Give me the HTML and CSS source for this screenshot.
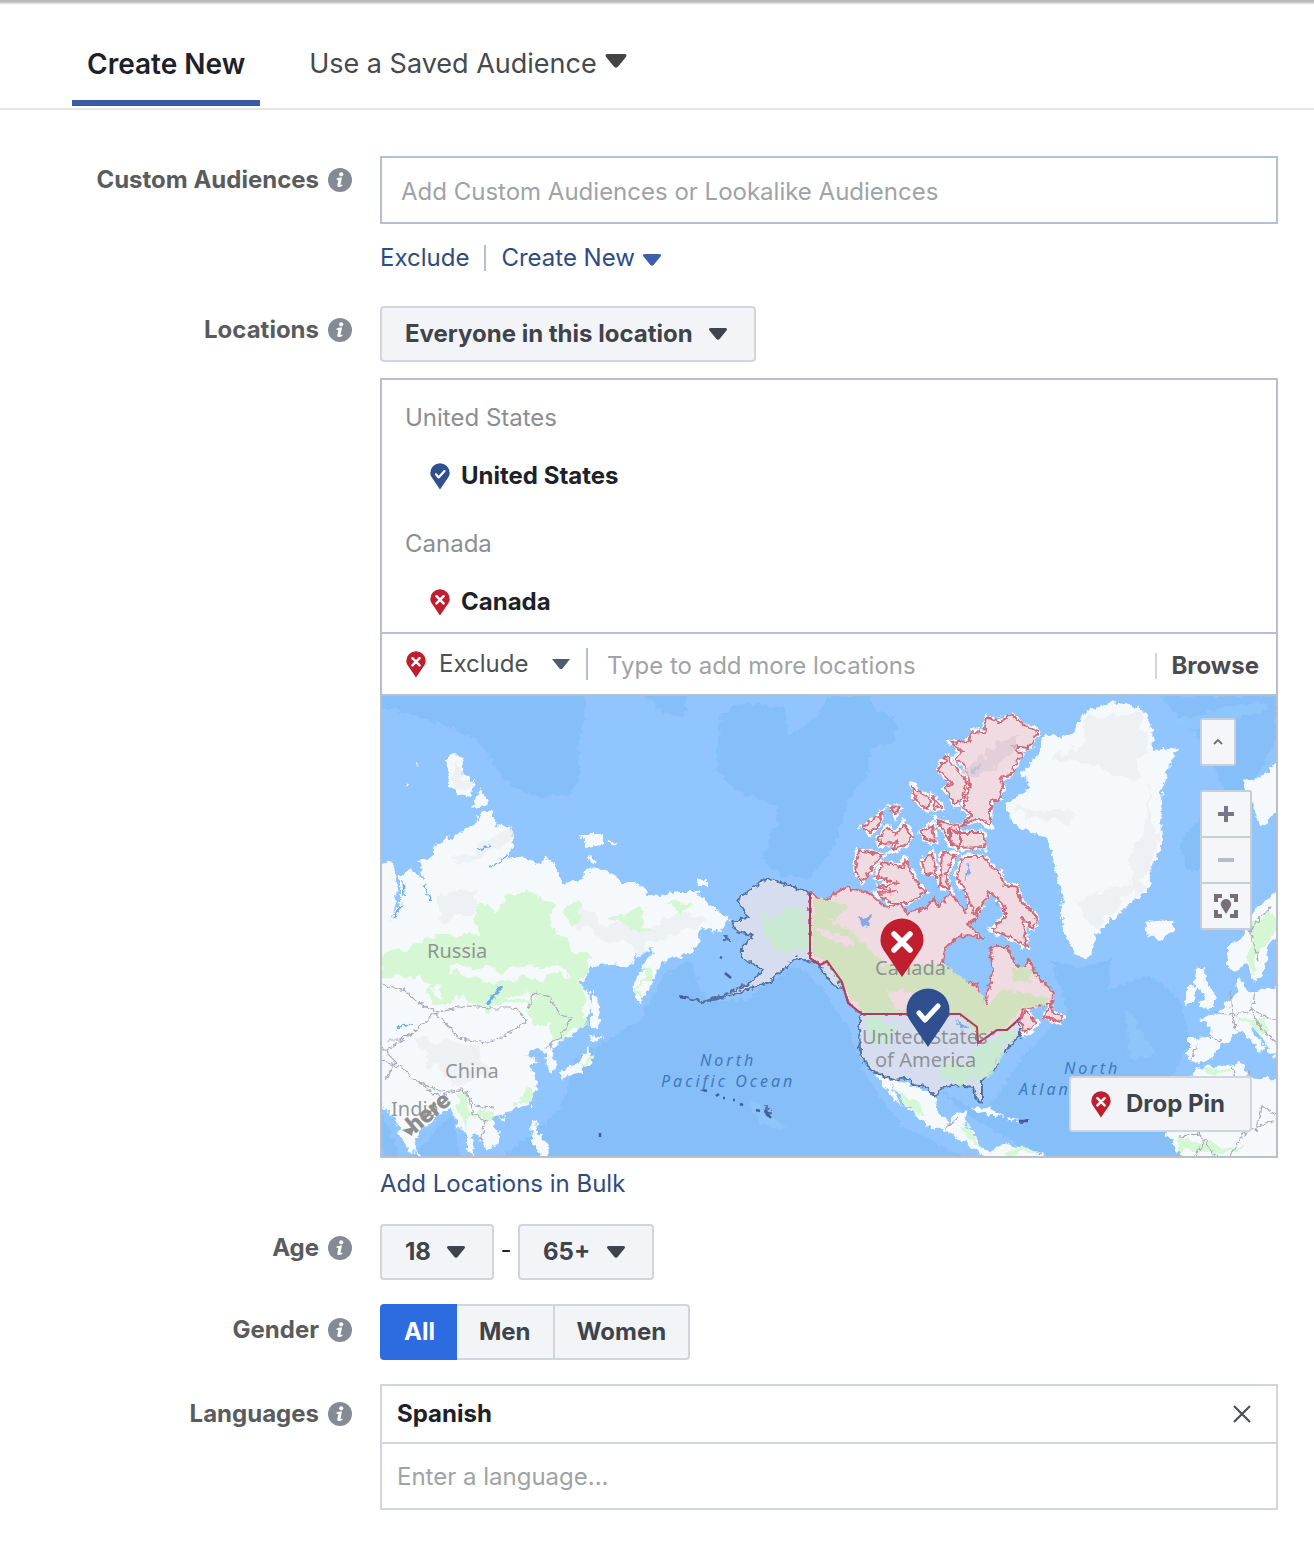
FILE: index.html
```html
<!DOCTYPE html>
<html lang="en">
<head>
<meta charset="utf-8">
<meta name="viewport" content="width=device-width, initial-scale=1">
<title>Audience</title>
<link rel="stylesheet" href="styles.css">
</head>
<body>
<svg class="sprite" aria-hidden="true">
  <symbol id="caret" viewBox="0 0 18 12"><path d="M2 0H16Q19 0 17.500 2.500L11 10.500Q9 13 7 10.500L.5 2.500Q-1 0 2 0Z" fill="currentColor"/></symbol>
  <symbol id="info" viewBox="0 0 24 24"><circle cx="12" cy="12" r="12" fill="#858b95"/><circle cx="13.200" cy="6.300" r="2.100" fill="#fff"/><path d="M8.600 10.600Q11 9.300 14 9.600L12.500 16.500Q12.300 17.600 14.600 16.600L14.300 18Q11.500 19.700 9.800 18.800Q9 18.200 9.400 16.700L10.400 12.200Q10.500 11.500 8.400 11.800Z" fill="#fff"/></symbol>
  <symbol id="pin-x" viewBox="0 0 44 60"><path d="M22 59L5 34C1.500 29 .5 26 .5 22A21.500 21.500 0 0 1 43.500 22C43.500 26 42.500 29 39 34Z" fill="#be1e2d"/><path d="M14 16L30 32M30 16L14 32" stroke="#fff" stroke-width="5.500" stroke-linecap="round"/></symbol>
  <symbol id="pin-check" viewBox="0 0 44 60"><path d="M22 59L5 34C1.500 29 .5 26 .5 22A21.500 21.500 0 0 1 43.500 22C43.500 26 42.500 29 39 34Z" fill="#2f4f8f"/><path d="M13 25L19 32L32 18" fill="none" stroke="#fff" stroke-width="5" stroke-linecap="round" stroke-linejoin="round"/></symbol>
</svg>

<nav class="tabs" aria-label="Audience source">
  <button class="tab tab-active" type="button">Create New</button>
  <button class="tab" type="button">Use a Saved Audience<svg class="tab-caret" aria-hidden="true"><use href="#caret"/></svg></button>
</nav>

<form class="form">
  <div class="row row-loose">
    <label class="label" for="custom">Custom Audiences<svg class="info" aria-hidden="true"><use href="#info"/></svg></label>
    <div class="field">
      <input class="text-input" id="custom" type="text" placeholder="Add Custom Audiences or Lookalike Audiences">
      <div class="links">
        <a class="link" href="#exclude">Exclude</a>
        <a class="link link-split" href="#create">Create New<svg class="link-caret" aria-hidden="true"><use href="#caret"/></svg></a>
      </div>
    </div>
  </div>

  <div class="row">
    <label class="label" for="scope">Locations<svg class="info" aria-hidden="true"><use href="#info"/></svg></label>
    <div class="field">
      <div class="select">
        <select class="select-box" id="scope"><option>Everyone in this location</option></select>
        <svg class="select-caret" aria-hidden="true"><use href="#caret"/></svg>
      </div>
      <div class="locations">
        <div class="location-list">
          <section class="group">
            <h3 class="group-title">United States</h3>
            <div class="place"><svg class="pin" aria-hidden="true"><use href="#pin-check"/></svg>United States</div>
          </section>
          <section class="group">
            <h3 class="group-title">Canada</h3>
            <div class="place"><svg class="pin" aria-hidden="true"><use href="#pin-x"/></svg>Canada</div>
          </section>
        </div>
        <div class="toolbar">
          <svg class="pin" aria-hidden="true"><use href="#pin-x"/></svg>
          <div class="mode">
            <select class="mode-box" aria-label="Include or exclude"><option>Exclude</option></select>
            <svg class="mode-caret" viewBox="0 0 18 11" aria-hidden="true"><path d="M0 0H18L10.500 9.500Q9 11 7.500 9.500Z" fill="#4f5b70"/></svg>
          </div>
          <input class="add-input" type="text" aria-label="Add locations" placeholder="Type to add more locations">
          <button class="browse" type="button">Browse</button>
        </div>
        <div class="map">
          <svg class="map-art" viewBox="382 696 894 460" preserveAspectRatio="xMidYMid slice" role="img" aria-label="World map">
            <defs>
              <filter id="rough" x="-2%" y="-2%" width="104%" height="104%"><feTurbulence type="fractalNoise" baseFrequency=".16" numOctaves="3" seed="4"/><feDisplacementMap in="SourceGraphic" scale="9" xChannelSelector="R" yChannelSelector="G"/></filter>
              <filter id="rough-fine" x="-2%" y="-2%" width="104%" height="104%"><feTurbulence type="fractalNoise" baseFrequency=".2" numOctaves="2" seed="9"/><feDisplacementMap in="SourceGraphic" scale="7" xChannelSelector="R" yChannelSelector="G"/></filter>
              <filter id="patchy" x="-5%" y="-5%" width="110%" height="110%"><feTurbulence type="fractalNoise" baseFrequency=".06" numOctaves="4" seed="12"/><feDisplacementMap in="SourceGraphic" scale="22" xChannelSelector="R" yChannelSelector="G"/></filter>
              <path id="arctic" d="M955 758L962 752L952 743L968 741L973 732L984 733L987 717L998 722L1013 715L1022 724L1038 732L1028 748L1012 746L1022 754L1010 775L1000 778L1003 788L1000 798L990 802V825L978 818L962 825L972 814L963 808L970 785L965 765ZM947 757L967 782L963 798L955 805L950 795L945 788L952 784L938 770ZM950 827L957 833L983 833L985 847L957 848L950 840ZM913 787L930 800L928 810L915 800ZM933 797L942 807L934 809ZM863 827L882 813L880 823L870 833ZM878 840L887 827L897 835L903 823L912 837L905 845L892 850L898 842L880 845ZM891 807L899 808L895 815ZM922 831L933 825L935 842L924 839ZM937 820L960 827V847L952 845L945 832ZM858 850L882 855L873 867L862 882L855 872ZM883 862L903 867L905 860L915 880L925 892L907 903L890 903L877 893L895 892L877 887L898 883L877 877ZM922 863L932 853L937 877L925 872ZM942 853L955 855L945 875L950 890L940 885ZM963 857H983L990 866L1000 873L1004 885L1017 887L1020 900L1037 917L1033 928L1022 918L1027 947L1010 937L992 930L1005 917V907L990 892L975 915L965 890L957 877ZM1025 1010L1037 1024L1024 1033L1021 1020ZM1050 1003L1053 1013L1062 1016L1060 1022L1045 1017Z"/>
            </defs>
            <rect x="382" y="696" width="894" height="460" fill="#90c6fd"/>
            <g fill="#86bef8" filter="url(#rough)">
              <path d="M378 690H586L584 720L578 745L580 775L570 795L540 798L512 788L494 765L478 740L442 724L400 712L378 707ZM640 690H686V716L664 714ZM720 716L740 702L785 708L788 735L812 722L832 695H870L874 708L898 720L894 742L870 748L868 775L848 800L836 845L808 880L780 875L762 858L776 825L776 805L735 790L716 768Z"/>
              <path d="M378 1105L400 1156H382ZM410 1160L440 1125L452 1115L462 1160ZM500 1160L560 1110L575 1060L640 1020L665 975L690 960L705 1000L745 1000L795 965L820 985L850 1030L862 1070L900 1125L950 1150L970 1160ZM940 1090L985 1115L1020 1060L1068 1010L1050 960L1085 968L1110 958L1108 990L1150 975L1180 1000L1190 1040L1160 1100L1180 1160H1050L1000 1135L960 1110ZM1160 696L1200 740L1225 790L1180 840L1185 870L1210 870L1230 830L1276 740V696Z"/>
            </g>
            <g fill="#92c8fd" opacity=".7" filter="url(#rough)"><path d="M1125 1005L1140 1030L1158 1055L1130 1060ZM1175 720L1260 700L1270 710L1190 730ZM750 1100L790 1130L760 1125Z"/></g>

            <g fill="#f5f9fc" filter="url(#rough)">
              <path d="M378 866L392 861L397 875L396 905L391 920L400 903L400 877L410 869L424 880L418 861L432 858L435 845L462 832L477 823L483 811L492 812L496 824L511 826L513 842L508 857L527 859L540 864L546 856L556 866L563 885L585 877L588 867L613 873L623 883L643 886L647 897L677 892L697 892L712 907L732 920L717 932L700 928L698 947L680 957L660 962L652 983L637 1005L633 983L645 964L655 947L640 953L630 965L593 967L577 987L588 993L592 1007L580 1030L560 1043L550 1050L558 1064L553 1073L547 1067L545 1052L537 1048L525 1055L538 1060L530 1067L538 1083L527 1105L505 1113L490 1118L501 1133L498 1143L487 1151L477 1133L471 1137L474 1158L467 1150L467 1133L458 1127L453 1110L443 1110L430 1123L418 1133L414 1152L408 1151L400 1133L395 1117L378 1105Z"/>
              <path d="M448 756L457 754L464 762L462 775L474 780L472 797L458 795L453 788L447 787ZM480 787L489 803L485 806L472 808ZM579 834L602 834V845L586 847ZM606 838L618 845L614 848ZM587 855L597 862L590 864ZM698 879H707L706 886H699ZM592 988L600 1008L598 1030L592 1025ZM590 1036L604 1038L592 1042ZM590 1045L592 1062L581 1072L562 1077L561 1070L580 1062ZM560 1073H565L563 1081ZM532 1102L535 1110L531 1110ZM531 1120L538 1122L537 1132L548 1145L549 1156H540L532 1142ZM415 762L418 765L415 764ZM406 784L409 788L407 788ZM415 1148L422 1156H417ZM499 1118L504 1116L504 1122Z"/>
              <path d="M1040 738L1056 733L1060 737L1073 735L1083 713L1113 702L1140 707L1152 728L1153 750L1180 748L1170 762L1161 798L1162 842L1150 872L1150 888L1120 912L1098 933L1088 960L1077 955L1066 937L1060 910L1063 898L1055 868L1047 838L1013 825L1006 805L1030 788L1022 772L1040 752Z"/>
              <path d="M1145 922L1170 920L1176 930L1160 940L1147 936ZM1243 780L1260 778L1278 762V812L1260 827L1252 805ZM1278 890L1253 912L1242 937L1227 947V967L1235 973L1246 962L1254 982L1264 973L1268 946L1280 933ZM1280 987L1247 992L1241 976L1236 983L1238 993L1217 1013L1200 1018L1212 1028L1210 1038L1188 1037L1188 1060L1199 1063L1212 1059L1220 1047L1242 1030L1260 1052L1265 1047L1250 1030L1257 1028L1268 1050L1280 1062ZM1196 969L1205 967L1206 982L1218 998L1213 1008L1198 1009L1204 996L1195 982ZM1185 988L1197 986L1195 1002L1185 1005ZM1188 1078L1200 1068L1242 1062L1248 1077L1280 1080V1160H1185L1165 1133Z"/>
              <path d="M868 1066L893 1079L936 1095L937 1110L950 1122L957 1112L967 1114L963 1127L974 1131L977 1145L990 1152L1007 1143L1023 1147L1050 1158H985L970 1145L950 1134L920 1121L907 1103L890 1084L902 1107L893 1099L880 1079ZM970 1109L990 1108L1005 1117L985 1114ZM1007 1117L1020 1120L1010 1123Z"/>
            </g>

            <g fill="#e9edef" opacity=".6" filter="url(#patchy)">
              <path d="M452 760L462 765L470 790L456 785ZM480 840L510 830L508 845L470 860L455 862ZM440 895L480 890L475 915L440 920ZM1090 720L1140 712L1148 742L1130 780L1100 765L1050 760L1080 745ZM1012 805L1075 812L1070 825L1030 818ZM1150 780L1155 860L1135 895L1128 860L1145 830ZM565 900L610 925L650 925L690 910L705 920L640 950L590 935ZM415 1040L470 1045L500 1075L455 1085L425 1060ZM1070 905L1140 880L1095 925Z"/>
            </g>
            <g fill="#d5f7d3" filter="url(#patchy)">
              <path d="M477 907L487 898L495 912L513 892L547 893L552 930L580 953L593 960L577 980L589 997L580 1028L553 1043L550 1023L530 1023L527 1007L513 1002L490 1010L470 998L437 1007L423 994L430 983L382 973V955L427 938L477 933Z"/>
              <path d="M565 905L580 902L578 925L566 922ZM608 918L640 906L642 925L660 930L625 930ZM660 905L690 902L680 915ZM640 970L650 968L640 995ZM583 1064L592 1052L590 1064L575 1070ZM518 1096L532 1090L532 1100L518 1108ZM455 1098L468 1095L475 1110L495 1115L490 1118L472 1115L466 1130L458 1118ZM1250 925L1275 910L1276 935L1262 950L1258 975L1250 965ZM895 1088L912 1095L925 1112L918 1115ZM955 1120L970 1130L985 1150L970 1140ZM1005 1148L1040 1152L1010 1156ZM1180 1136L1215 1142L1245 1150L1210 1156L1180 1150ZM1200 1070L1235 1066L1210 1075ZM1235 1025L1262 1020L1270 1034L1248 1028Z"/>
            </g>
            <g fill="#f5f9fc" filter="url(#patchy)"><path d="M450 965L500 970L545 965L570 975L510 982L450 974ZM430 990L440 985L445 997ZM500 998L530 990L540 1000Z"/></g>
            <g fill="none" stroke="#6bacf2" stroke-width="3" filter="url(#rough-fine)"><path d="M488 1004L501 986"/><path d="M398 1028Q404 1023 414 1025M393 918L402 904M403 880L404 895M425 885L430 900M478 850L490 845M508 855L490 868" stroke-width="1.500"/></g>
            <g fill="none" stroke="#aaa7b9" stroke-width="1.200" filter="url(#rough-fine)">
              <path d="M382 984L405 990L418 1003L438 1012L468 1006L490 1008L515 1008L528 1020L500 1038L486 1043L458 1038L445 1022L435 1013L415 1030L402 1040L382 1052M528 1008L535 992L550 998L560 1015L571 1018L560 1038L545 1048M382 1062L400 1066L412 1078L440 1092L462 1090L475 1105L493 1107M382 1048L396 1062L386 1080M400 1040L386 1040M467 1090L472 1112L486 1122L480 1140M418 1082L438 1096L455 1092"/>
              <path d="M1230 992L1232 1015L1215 1012M1255 992L1252 1010L1232 1015L1236 1030M1252 1010L1276 1020M1208 1037L1222 1041M1196 1043L1192 1060M1232 1064L1238 1095M1250 1010L1262 1030L1276 1042M1230 1156L1245 1132L1276 1120M1255 1132L1262 1105L1276 1115M1180 1136L1200 1134L1216 1156M1196 1156L1204 1140M945 1128L958 1118M1248 1080L1250 1070M1258 960L1250 930L1272 905"/>
            </g>

            <g fill="#d6ddee" stroke="#55709f" stroke-width="2" stroke-linejoin="round" filter="url(#rough-fine)">
              <path d="M810 893L793 887L767 878L750 890L738 900L748 917L732 923L737 932L753 935L742 947L742 958L763 970L750 983L730 993L703 1002L730 996L750 988L770 982L795 958L817 963L834 986L843 988L828 962L810 958Z"/>
              <path d="M862 1014H960L977 1027L978 1043L997 1030L1020 1020L1020 1035L1012 1043L997 1060L996 1068L982 1080L982 1102L976 1100L973 1087L957 1085L942 1088L935 1097L925 1087L913 1085L910 1078L893 1080L870 1070L860 1053L859 1023Z"/>
              <path d="M703 1001L680 997M724 936L731 941L724 940ZM765 1107L770 1112L768 1116ZM1020 1121H1028"/>
            </g>
            <g fill="#c9ebd1" opacity=".9" filter="url(#patchy)"><path d="M765 915L800 908L808 925L806 950L775 952L760 935ZM985 1042L1012 1030L1005 1050L990 1070L978 1080L945 1080L950 1062L975 1060ZM864 1020L885 1018L890 1035L872 1045ZM942 1063L955 1064L955 1080L942 1078Z"/></g>
            <g fill="#f5f9fc" stroke="#f5f9fc" stroke-width="5" filter="url(#rough)"><use href="#arctic"/></g>
            <g fill="#f1dbe3" stroke="#d16978" stroke-width="2" stroke-linejoin="round" filter="url(#rough-fine)">
              <path d="M810 893L827 902L836 892L847 888L867 892L887 908L900 903L907 913L927 908L933 898L940 907L950 893L965 912L972 892L979 907L977 917L967 925L983 938L968 935L957 937L945 948L943 963L957 980L977 985L980 1000L987 1003L988 990L993 973L990 947H1007L1015 963L1025 972L1028 958L1035 973L1053 993L1052 1003L1023 1008L1021 1016L1020 1020L1007 1030H997L978 1043L977 1027L960 1014H862L848 1003L842 982L827 962L820 965L810 958Z"/>
              <use href="#arctic"/>
            </g>
            <g fill="#d3e2be" filter="url(#rough)"><path d="M812 912L850 930L885 965L945 965L978 990L988 1006L1000 990L1052 997L1046 1004L1022 1008L1005 1028L980 1036L960 1014H864L850 998L828 962L812 955ZM1010 968L1030 968L1032 983L1014 980ZM815 898L848 905L835 920L815 915Z"/></g>
            <g fill="#f1dbe3" filter="url(#rough)"><path d="M888 990L912 992L915 1010L895 1010ZM814 928L850 938L855 948L830 940Z"/></g>
            <path d="M860 918L872 913L870 925L862 928ZM955 1022L970 1026L962 1030ZM970 770L980 764L976 775ZM965 885L970 870L968 862ZM995 902L1000 900L998 908Z" fill="#84aae5" filter="url(#rough)"/>
            <path d="M960 775L985 750L1020 735L1015 750L980 775Z" fill="#dccbd6" opacity=".7" filter="url(#patchy)"/>
            <path d="M810 893V958L820 965L827 961L842 982L848 1003L862 1014H960L977 1027L978 1043L997 1030H1007L1020 1018" fill="none" stroke="#a9405b" stroke-width="2"/>
            <path d="M703 1090L707 1091M716 1096L719 1094M723 1098H725M733 1100H735M740 1104L743 1105M756 1110L760 1111M765 1111L771 1118M720 957L722 958M725 973L731 978M680 997L686 998M1019 1121H1028M600 1133V1137" stroke="#3d5f9f" stroke-width="2.500"/>

            <g class="map-country">
              <text x="427" y="958">Russia</text>
              <text x="445" y="1078">China</text>
              <text x="391" y="1116">India</text>
              <text x="875" y="975">Canada</text>
              <text><tspan x="862" y="1044">United States </tspan><tspan x="875" y="1067">of America</tspan></text>
            </g>
            <g class="map-ocean">
              <text x="700" y="1066">North</text>
              <text x="661" y="1087">Pacific Ocean</text>
              <text x="1064" y="1074">North</text>
              <text x="1019" y="1095">Atlantic</text>
            </g>
            <g fill="#8d8d8d"><text class="map-brand" transform="translate(415 1134) rotate(-40)">here</text><path d="M402 1130L414 1127L412 1136Z"/></g>
            <use href="#pin-x" x="880" y="918" width="44" height="60"/>
            <use href="#pin-check" x="906" y="988" width="44" height="60"/>
          </svg>
          <div class="map-controls">
            <button class="map-button map-collapse" type="button" aria-label="Collapse map"><svg width="10" height="8" viewBox="0 0 10 8"><path d="M1 6L5 2L9 6" fill="none" stroke="#70717b" stroke-width="1.800"/></svg></button>
            <div class="map-zoom">
              <button class="map-button" type="button" aria-label="Zoom in"><svg width="16" height="16" viewBox="0 0 16 16"><path d="M0 8H16M8 0V16" stroke="#777784" stroke-width="4"/></svg></button>
              <button class="map-button" type="button" aria-label="Zoom out"><svg width="16" height="16" viewBox="0 0 16 16"><path d="M0 8H16" stroke="#b9bac7" stroke-width="4"/></svg></button>
              <button class="map-button" type="button" aria-label="Fit to pins"><svg width="24" height="24" viewBox="0 0 24 24"><path d="M2 8V2H8M16 2H22V8M22 16V22H16M8 22H2V16" fill="none" stroke="#77707b" stroke-width="4"/><path d="M12 20L8 13.500A5.200 5.200 0 1 1 16 13.500Z" fill="#77707b"/></svg></button>
            </div>
          </div>
          <button class="drop-pin" type="button"><svg class="pin" aria-hidden="true"><use href="#pin-x"/></svg>Drop Pin</button>
        </div>
      </div>
      <div class="links links-tight"><a class="link" href="#bulk">Add Locations in Bulk</a></div>
    </div>
  </div>

  <div class="row">
    <label class="label" for="age-min">Age<svg class="info" aria-hidden="true"><use href="#info"/></svg></label>
    <div class="field ages">
      <div class="select">
        <select class="select-box" id="age-min"><option>18</option></select>
        <svg class="select-caret" aria-hidden="true"><use href="#caret"/></svg>
      </div>
      <span class="dash">-</span>
      <div class="select">
        <select class="select-box" aria-label="Maximum age"><option>65+</option></select>
        <svg class="select-caret" aria-hidden="true"><use href="#caret"/></svg>
      </div>
    </div>
  </div>

  <div class="row">
    <div class="label label-mid" id="gender-label">Gender<svg class="info" aria-hidden="true"><use href="#info"/></svg></div>
    <div class="field segments" role="radiogroup" aria-labelledby="gender-label">
      <label class="segment"><input class="segment-input" type="radio" name="gender" checked>All</label>
      <label class="segment"><input class="segment-input" type="radio" name="gender">Men</label>
      <label class="segment"><input class="segment-input" type="radio" name="gender">Women</label>
    </div>
  </div>

  <div class="row">
    <label class="label label-tall" for="language">Languages<svg class="info" aria-hidden="true"><use href="#info"/></svg></label>
    <div class="field languages">
      <div class="language">Spanish<button class="remove" type="button" aria-label="Remove Spanish"><svg width="20" height="20" viewBox="0 0 20 20"><path d="M2 2L18 18M18 2L2 18" stroke="#4b4f56" stroke-width="2.200"/></svg></button></div>
      <input class="language-input" id="language" type="text" placeholder="Enter a language...">
    </div>
  </div>
</form>
</body>
</html>
```
FILE: styles.css
```css
* { box-sizing: border-box; }

body {
  margin: 0;
  background: #fff;
  color: #1d2129;
  font: 24px/32px Inter, "Liberation Sans", sans-serif;
}

button, input, select { font: inherit; color: inherit; margin: 0; }
button { padding: 0; border: 0; background: none; cursor: pointer; }
select { appearance: none; cursor: pointer; }
::placeholder { color: #a0a3a6; opacity: 1; }

.sprite { position: absolute; width: 0; height: 0; }

/* Tabs */
.tabs {
  display: flex;
  gap: 34px;
  height: 110px;
  padding: 0 72px 2px;
  border-bottom: 2px solid #e4e6e8;
  background: linear-gradient(#b4b4b4, #c0c0c0 2px, #fff 5px);
}
.tab {
  display: flex;
  align-items: center;
  padding: 28px 15px 0;
  border-bottom: 6px solid transparent;
  color: #46494d;
  font-size: 27px;
}
.tab-active {
  border-bottom-color: #3b5a9f;
  color: #1d2129;
  font-size: 28px;
  font-weight: 600;
}
.tab-caret { width: 22px; height: 14px; margin: 0 0 6px 8px; color: #444; }

/* Form rows */
.form {
  display: flex;
  flex-direction: column;
  gap: 24px;
  padding: 46px 36px 36px;
}
.row { display: grid; grid-template-columns: 316px minmax(0, 1fr); column-gap: 28px; }
.row-loose { margin-bottom: 8px; }
.label {
  display: flex;
  justify-content: flex-end;
  align-items: center;
  gap: 9px;
  height: 48px;
  color: #5a5b5d;
  font-weight: 700;
}
.label-mid { height: 52px; }
.label-tall { height: 60px; }
.info { width: 24px; height: 24px; }

.text-input {
  display: block;
  width: 100%;
  height: 68px;
  padding: 2px 19px 0;
  border: 2px solid #b4c0d2;
}
.links { display: flex; align-items: center; height: 34px; margin-top: 17px; }
.links-tight { margin-top: 9px; margin-bottom: -1px; }
.row-loose .links { margin-bottom: -1px; }
.link { color: #2f4c82; text-decoration: none; }
.link-split { margin-left: 15px; padding-left: 15px; border-left: 2px solid #b4c0d2; line-height: 26px; }
.link-caret { width: 20px; height: 12px; margin-left: 7px; color: #3b5fae; }

/* Drop-downs */
.select { position: relative; display: inline-block; vertical-align: top; }
.select-box {
  height: 56px;
  padding: 0 61px 0 23px;
  border: 2px solid #d2d5d9;
  border-radius: 4px;
  background: #f3f4f7;
  color: #3f434a;
  font-weight: 700;
}
.select-caret {
  position: absolute;
  right: 28px;
  top: 22px;
  width: 20px;
  height: 12px;
  color: #3f434a;
  pointer-events: none;
}

/* Locations */
.locations { margin-top: 16px; border: 2px solid #b9bec9; }
.location-list {
  display: flex;
  flex-direction: column;
  gap: 36px;
  padding: 22px 23px 14px;
  border-bottom: 2px solid #b4bfd2;
}
.group { display: flex; flex-direction: column; gap: 26px; }
.group-title { margin: 0; color: #8b8e92; font-size: 24px; font-weight: 400; }
.place { display: flex; align-items: center; gap: 11px; padding-left: 25px; font-weight: 700; }
.pin { flex: none; width: 20px; height: 27px; }

.toolbar {
  display: flex;
  align-items: center;
  height: 62px;
  padding: 0 17px 0 24px;
  border-bottom: 2px solid #b4bfd2;
}
.mode {
  position: relative;
  margin-left: 9px;
  border-right: 2px solid #b4c0d2;
}
.mode-box { padding: 0 57px 0 4px; border: 0; background: none; color: #4b5158; }
.mode-caret { position: absolute; right: 16px; top: 11px; width: 18px; height: 11px; pointer-events: none; }
.add-input { flex: 1; min-width: 0; padding: 3px 19px 0; border: 0; background: none; }
.browse {
  margin-top: 4px;
  padding-left: 14px;
  border-left: 2px solid #d3d5d8;
  color: #4b4c4f;
  font-weight: 700;
  line-height: 26px;
}

/* Map */
.map { position: relative; overflow: hidden; }
.map-art { display: block; width: 100%; height: auto; }
.map-country { font: 20px "Noto Sans", sans-serif; fill: #808489; fill-opacity: 0.85; }
.map-ocean { font: italic 16px "Noto Sans", sans-serif; letter-spacing: 3px; fill: #4079bd; }
.map-brand { font: 900 24px Roboto, sans-serif; }
.map-controls {
  position: absolute;
  top: 22px;
  right: 24px;
  display: flex;
  flex-direction: column;
  align-items: flex-start;
  gap: 24px;
}
.map-button {
  display: flex;
  align-items: center;
  justify-content: center;
  background: #f5f6f9;
}
.map-collapse { width: 36px; height: 48px; border: 2px solid #c9d0dc; border-radius: 3px; }
.map-zoom { width: 52px; border: 2px solid #c9cdd6; border-radius: 3px; }
.map-zoom .map-button { box-sizing: content-box; width: 100%; height: 44px; }
.map-zoom .map-button + .map-button { border-top: 2px solid #c9cdd6; }
.drop-pin {
  position: absolute;
  right: 24px;
  bottom: 24px;
  display: flex;
  align-items: center;
  gap: 15px;
  height: 56px;
  padding: 0 25px 0 20px;
  border: 2px solid #d2d5de;
  border-radius: 4px;
  background: #f3f4f7;
  color: #3f434a;
  font-weight: 700;
}

/* Age */
.ages { display: flex; }
.dash { width: 24px; line-height: 52px; text-align: center; }

/* Gender */
.segments { display: flex; }
.segment {
  height: 56px;
  padding: 0 22px;
  border: 2px solid #d2d5d9;
  border-right-width: 0;
  background: #f3f4f7;
  color: #3f434a;
  font-weight: 700;
  line-height: 52px;
  cursor: pointer;
}
.segment:first-child { border-radius: 4px 0 0 4px; }
.segment:last-child { border-right-width: 2px; border-radius: 0 4px 4px 0; }
.segment:has(:checked) { border-color: #2d6be0; background: #2d6be0; color: #fff; }
.segment:has(:checked) + .segment { border-left-width: 0; }
.segment-input { position: absolute; opacity: 0; pointer-events: none; }

/* Languages */
.languages { border: 2px solid #d2d5d9; }
.language {
  display: flex;
  align-items: center;
  justify-content: space-between;
  height: 58px;
  padding: 0 24px 0 15px;
  border-bottom: 2px solid #d2d5d9;
  font-weight: 700;
}
.remove { display: flex; }
.language-input { display: block; width: 100%; height: 64px; padding: 0 15px; border: 0; background: none; }
```
